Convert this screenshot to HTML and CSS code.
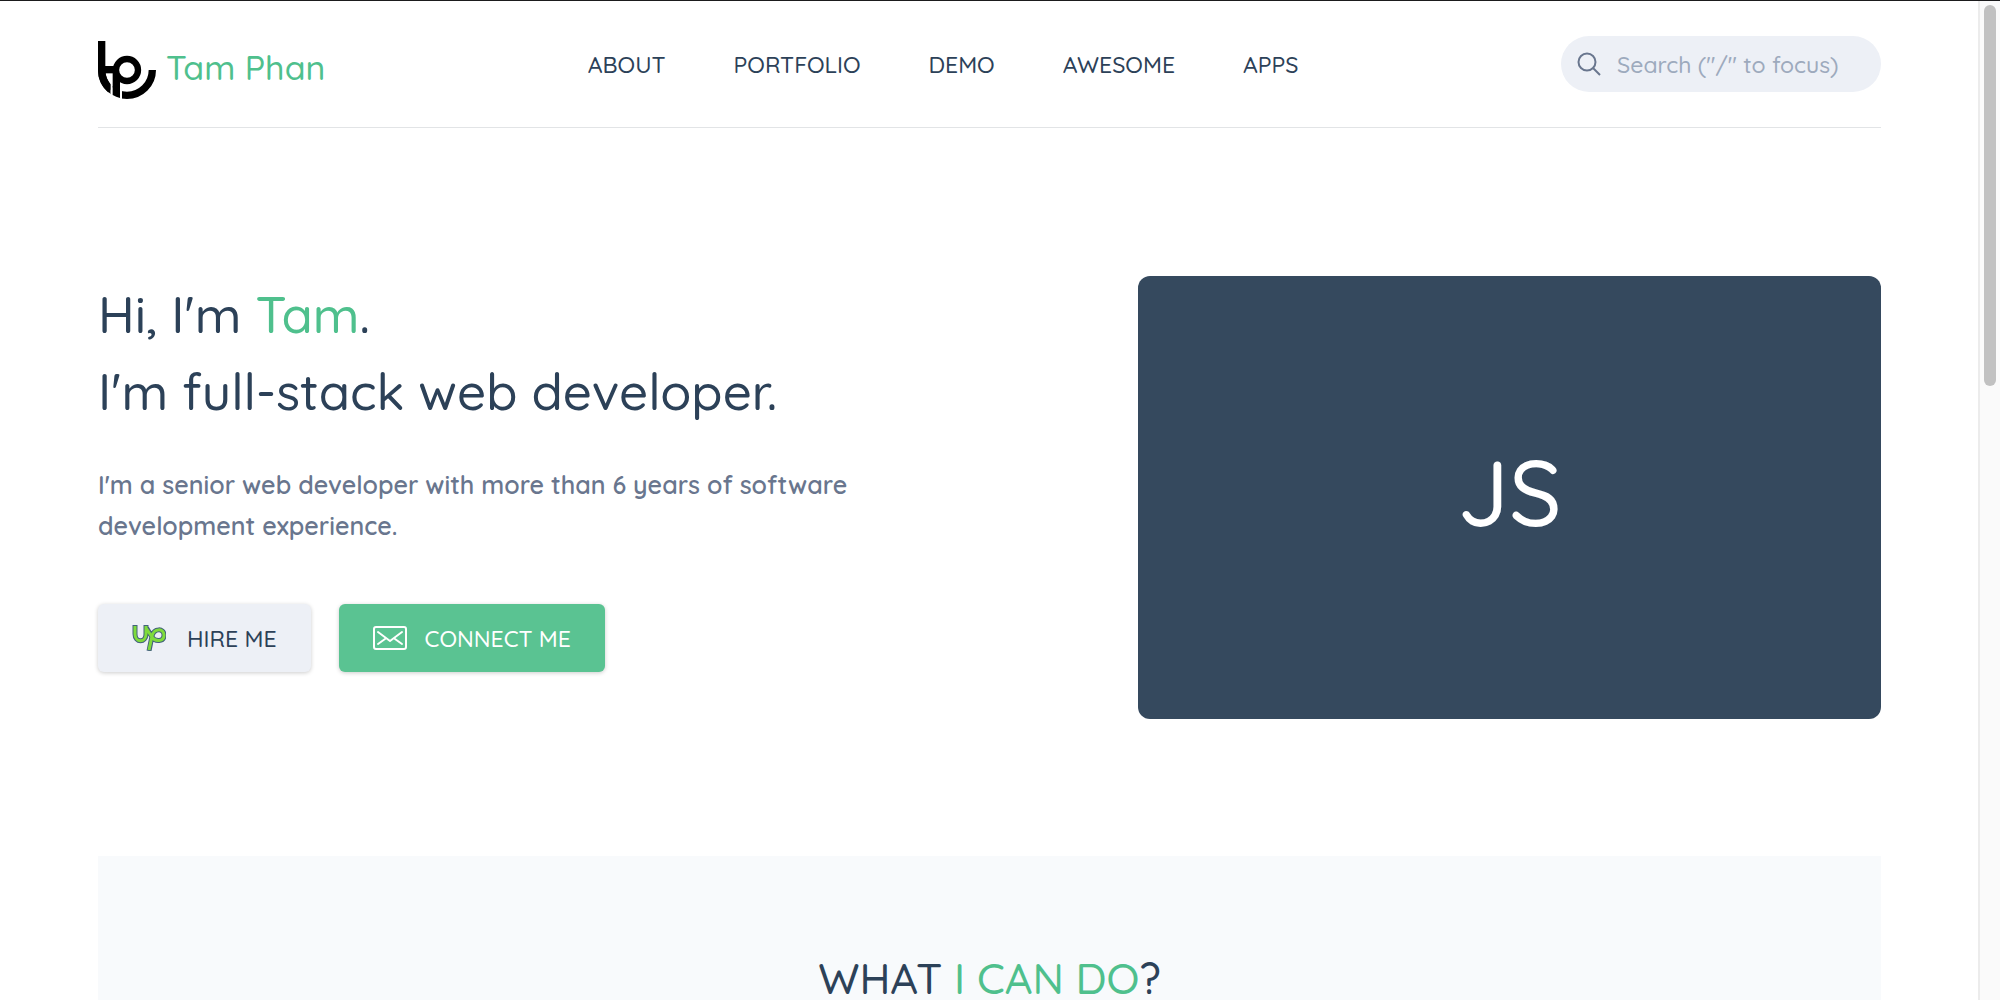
FILE: index.html
```html
<!DOCTYPE html>
<html lang="en">
<head>
<meta charset="utf-8">
<meta name="viewport" content="width=device-width, initial-scale=1">
<title>Tam Phan</title>
<link rel="stylesheet" href="styles.css">
</head>
<body>
<div class="page">
  <header class="header">
    <a class="brand" href="#">
      <svg class="brand-logo" viewBox="0 0 174 174" aria-hidden="true">
        <path d="M11 0V87A76 76 0 0 0 163 87" fill="none" stroke="#000" stroke-width="22"/>
        <path d="M38 94H72V174H38z" fill="#fff"/>
        <path d="M20 75H52V97H20z"/>
        <path d="M11 87A76 76 0 0 0 38 146" fill="none" stroke="#000" stroke-width="22"/>
        <path d="M38 100H44V174H38z" fill="#fff"/>
        <path d="M44 87H66V171Q54 168 44 162z"/>
        <circle cx="87" cy="87" r="33" fill="#fff" stroke="#000" stroke-width="19"/>
      </svg>
      <span>Tam Phan</span>
    </a>
    <nav class="nav">
      <a href="#about">ABOUT</a>
      <a href="#portfolio">PORTFOLIO</a>
      <a href="#demo">DEMO</a>
      <a href="#awesome">AWESOME</a>
      <a href="#apps">APPS</a>
    </nav>
    <label class="search">
      <svg class="search-icon" viewBox="0 0 24 24" aria-hidden="true"><circle cx="10" cy="10" r="8.500"/><path d="M16 16L23 23"/></svg>
      <input type="search" aria-label="Search" placeholder='Search ("/" to focus)'>
    </label>
  </header>

  <main>
    <section class="hero">
      <div class="intro">
        <h1>Hi, I'm <span class="accent">Tam</span>.<br>I'm full-stack web developer.</h1>
        <p>I'm a senior web developer with more than 6 years of software development experience.</p>
        <div class="actions">
          <button class="button" type="button">
            <svg class="button-icon" viewBox="0 0 34 26" aria-hidden="true">
              <g fill="none" stroke-linejoin="round">
                <path d="M3 0V9C3 18 14 18 14 9V0M14 2L20 12M17 26L20 11C22 3 32 3 32 10C32 17 23 17 20 12" stroke="#42627b" stroke-width="5"/>
                <path d="M3 1V9C3 18 14 18 14 9V1M14 3L20 12M17 25L20 11C22 3 32 3 32 10C32 17 23 17 20 12" stroke="#7fdb3c" stroke-width="3"/>
              </g>
            </svg>
            HIRE ME
          </button>
          <button class="button button-primary" type="button">
            <svg class="button-icon" viewBox="0 0 34 26" aria-hidden="true">
              <g fill="none" stroke="#fff" stroke-width="2" stroke-linecap="round" stroke-linejoin="round">
                <rect x="1" y="2" width="32" height="22" rx="2"/>
                <path d="M5 7L17 16L29 7M5 19L12 14M29 19L22 14"/>
              </g>
            </svg>
            CONNECT ME
          </button>
        </div>
      </div>
      <div class="showcase">JS</div>
    </section>

    <section class="skills">
      <h2>WHAT <span class="accent">I CAN DO</span>?</h2>
    </section>
  </main>
</div>
<div class="scroll-track" aria-hidden="true"><div class="scroll-thumb"></div></div>
</body>
</html>
```
FILE: styles.css
```css
* { box-sizing: border-box; }

body {
  display: flex;
  height: 100vh;
  margin: 0;
  overflow: hidden;
  border-top: 1px solid #1b1b1d;
  background: #fff;
  color: #2c4158;
  font-family: Quicksand, Lato, sans-serif;
  font-weight: 500;
}

.page {
  flex: 1;
  min-width: 0;
  padding: 0 97px 0 98px;
}

a { color: inherit; text-decoration: none; }
h1, h2, p { margin: 0; font-weight: inherit; }
.accent { color: #4fc08d; }

.header {
  display: flex;
  align-items: center;
  justify-content: space-between;
  height: 127px;
  border-bottom: 1px solid #e2e4e6;
}

.brand {
  display: flex;
  align-items: center;
  gap: 10px;
  padding-top: 12px;
  color: #4fc08d;
  font-size: 34px;
}
.brand-logo { width: 58px; height: 58px; }
.brand span { line-height: 40px; padding-bottom: 4px; }

.nav {
  display: flex;
  gap: 68px;
  font-size: 23px;
}

.search {
  display: flex;
  align-items: center;
  gap: 16px;
  width: 320px;
  height: 56px;
  padding: 0 16px;
  border-radius: 28px;
  background: #edf0f6;
}
.search-icon {
  flex: none;
  width: 24px;
  height: 24px;
  fill: none;
  stroke: #69768e;
  stroke-width: 2;
}
.search input {
  flex: 1;
  min-width: 0;
  padding: 0;
  border: 0;
  outline: 0;
  background: none;
  color: #2c4158;
  font: inherit;
  font-size: 23px;
}
.search input::placeholder { color: #9daabd; opacity: 1; }

.hero {
  display: flex;
  align-items: flex-start;
  justify-content: space-between;
  padding: 148px 0 137px;
}

.intro { width: 50%; }
.intro h1 { font-size: 51px; line-height: 77px; }
.intro p {
  margin-top: 34px;
  color: #69768e;
  font-size: 25px;
  font-weight: 600;
  line-height: 41px;
}

.actions { display: flex; gap: 28px; margin-top: 58px; }

.button {
  display: flex;
  align-items: center;
  gap: 21px;
  height: 68px;
  padding: 0 34px;
  border: 0;
  border-radius: 6px;
  background: #edf0f6;
  box-shadow: 0 1px 4px rgba(0, 0, 0, 0.2);
  color: #2c4158;
  font: inherit;
  font-size: 23px;
}
.button-primary { gap: 18px; background: #5ac392; color: #fff; }
.button-icon { width: 34px; height: 26px; }

.showcase {
  display: flex;
  align-items: center;
  justify-content: center;
  width: 41.6667%;
  height: 443px;
  padding-bottom: 12px;
  border-radius: 12px;
  background: #35495e;
  color: #fff;
  font-size: 92px;
}

.skills {
  padding: 96px 0;
  background: #f8fafc;
  text-align: center;
}
.skills h2 { font-size: 43px; line-height: 52px; }

.scroll-track {
  width: 22px;
  padding: 4px;
  border-left: 2px solid #ececec;
  background: #fafafa;
}
.scroll-thumb {
  width: 12px;
  height: 381px;
  border-radius: 6px;
  background: #c1c1c1;
}
```
